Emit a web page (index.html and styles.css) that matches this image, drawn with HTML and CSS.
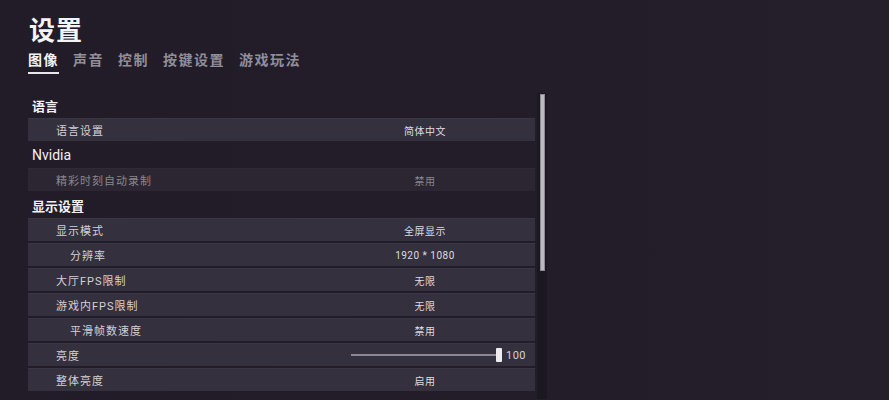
FILE: index.html
```html
<!DOCTYPE html>
<html lang="zh-CN">
<head>
<meta charset="utf-8">
<title>设置</title>
<link rel="stylesheet" href="styles.css">
</head>
<body>
<div class="page">
  <header class="header">
    <h1 class="title">设置</h1>
    <nav class="tabs">
      <span class="tab active">图像</span>
      <span class="tab">声音</span>
      <span class="tab">控制</span>
      <span class="tab">按键设置</span>
      <span class="tab">游戏玩法</span>
    </nav>
  </header>
  <div class="content">
    <div class="list">
      <div class="section">语言</div>
      <div class="row"><span class="label">语言设置</span><span class="value">简体中文</span></div>
      <div class="section latin">Nvidia</div>
      <div class="row disabled"><span class="label">精彩时刻自动录制</span><span class="value">禁用</span></div>
      <div class="section">显示设置</div>
      <div class="row"><span class="label">显示模式</span><span class="value">全屏显示</span></div>
      <div class="row sub"><span class="label">分辨率</span><span class="value">1920 * 1080</span></div>
      <div class="row"><span class="label">大厅FPS限制</span><span class="value">无限</span></div>
      <div class="row"><span class="label">游戏内FPS限制</span><span class="value">无限</span></div>
      <div class="row sub"><span class="label">平滑帧数速度</span><span class="value">禁用</span></div>
      <div class="row"><span class="label">亮度</span>
        <span class="value slider-cell">
          <span class="track"></span><span class="thumb"></span><span class="num">100</span>
        </span>
      </div>
      <div class="row"><span class="label">整体亮度</span><span class="value">启用</span></div>
    </div>
    <div class="scroll"><div class="scroll-thumb"></div></div>
  </div>
</div>
</body>
</html>
```
FILE: styles.css
```css
* { box-sizing: border-box; }
html, body {
  margin: 0;
  height: 100%;
  background: #211c28;
  overflow: hidden;
}
body {
  font-family: "Noto Sans CJK SC", "Noto Sans", sans-serif;
  color: #e6e4ea;
}
.page {
  width: 889px;
  height: 400px;
  background: linear-gradient(90deg, #211c28 0%, #221d29 60%, #241f2b 100%);
}
.header {
  padding: 13px 0 0 29px;
}
.title {
  margin: 0;
  font-size: 26px;
  line-height: 32px;
  font-weight: 700;
  color: #f4f3f6;
  letter-spacing: 1px;
}
.tabs {
  display: flex;
  gap: 14px;
  margin-top: 4px;
  margin-left: -1px;
}
.tab {
  font-size: 14px;
  line-height: 20px;
  font-weight: 700;
  color: #918e99;
  letter-spacing: 1.5px;
  padding-bottom: 3px;
}
.tab.active {
  color: #f2f1f4;
  border-bottom: 2px solid #e8e6ec;
}
.content {
  display: flex;
  margin-top: 19px;
  padding-left: 28px;
}
.list {
  width: 507px;
  display: flex;
  flex-direction: column;
}
.section {
  height: 25px;
  line-height: 25px;
  padding-left: 4px;
  font-size: 13px;
  font-weight: 700;
  color: #f2f1f4;
}
.section.latin {
  font-family: "Roboto", "Noto Sans", sans-serif;
  font-weight: 400;
  font-size: 14px;
}
.row {
  height: 23px;
  margin-bottom: 2px;
  display: flex;
  align-items: center;
  background: #35303d;
  border-top: 1px solid #3b3643;
  font-size: 11px;
  font-family: "Roboto", "Noto Sans CJK SC", sans-serif;
}
.row.disabled {
  background: #2b2632;
  border-top-color: #2f2a36;
}
.label {
  flex: 1;
  padding-left: 28px;
  color: #d3d1d8;
  letter-spacing: 1px;
}
.row.sub .label { padding-left: 42px; }
.row.disabled .label,
.row.disabled .value { color: #8a8791; }
.value {
  width: 220px;
  text-align: center;
  font-size: 10px;
  color: #dddbe2;
  letter-spacing: 0.5px;
}
.slider-cell {
  display: flex;
  align-items: center;
  padding-left: 36px;
}
.track {
  width: 145px;
  height: 2px;
  background: #8b8794;
}
.thumb {
  width: 6px;
  height: 14px;
  background: #eeecf1;
  border-radius: 1px;
}
.num {
  margin-left: 4px;
  font-size: 11px;
  color: #d6d4db;
}
.scroll {
  width: 10px;
  margin-left: 2px;
  height: 306px;
  background: #1c1822;
  display: flex;
  justify-content: center;
}
.scroll-thumb {
  margin-top: 1px;
  width: 5px;
  height: 177px;
  background: #bcb8c4;
  border: 1px solid #8e8a96;
}
```
